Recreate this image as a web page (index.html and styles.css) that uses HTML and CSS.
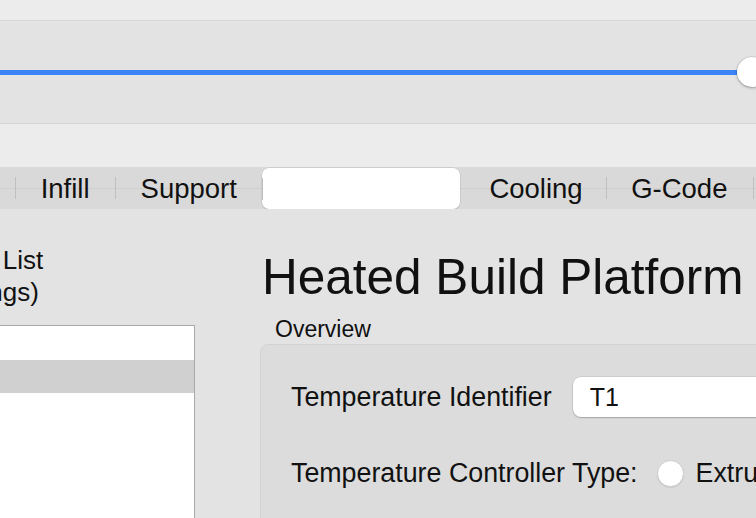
FILE: index.html
```html
<!DOCTYPE html>
<html lang="en">
<head>
<meta charset="utf-8">
<title>FFF Settings</title>
<link rel="stylesheet" href="styles.css">
</head>
<body>
  <div class="window">
    <div class="titlebar"></div>

    <div class="layer-bar">
      <div class="slider">
        <div class="slider-track"></div>
        <div class="slider-knob"></div>
      </div>
    </div>

    <div class="tab-strip">
      <div class="tabs">
        <div class="tab">Additions</div>
        <div class="tab">Infill</div>
        <div class="tab">Support</div>
        <div class="tab tab-active"></div>
        <div class="tab tab-cooling">Cooling</div>
        <div class="tab">G-Code</div>
        <div class="tab">Scripts</div>
      </div>
    </div>

    <div class="content">
      <div class="controller-list">
        <div class="list-title">Temperature Controller List<br>(Click item to edit settings)</div>
        <div class="list-box">
          <div class="list-row">Primary Extruder</div>
          <div class="list-row list-row-selected">Heated Build Platform</div>
        </div>
      </div>

      <div class="controller-detail">
        <h1 class="detail-title">Heated Build Platform</h1>
        <div class="group-label">Overview</div>
        <div class="group-box">
          <div class="form-row">
            <span class="form-label">Temperature Identifier</span>
            <div class="text-field">T1</div>
          </div>
          <div class="form-row">
            <span class="form-label">Temperature Controller Type:</span>
            <span class="radio"></span>
            <span class="radio-label">Extruder</span>
          </div>
        </div>
      </div>
    </div>
  </div>
</body>
</html>
```

FILE: styles.css
```css
html, body {
  margin: 0;
  padding: 0;
}

body {
  width: 756px;
  height: 518px;
  overflow: hidden;
  background: #e3e3e3;
  font-family: "Liberation Sans", Arial, sans-serif;
  color: #111;
}

.window {
  width: 756px;
}

/* window chrome */
.titlebar {
  height: 20px;
  background: #ececec;
  border-bottom: 1px solid #d7d7d7;
}

.layer-bar {
  height: 102px;
  background: #e3e3e3;
  border-bottom: 1px solid #d5d5d5;
  display: flex;
  align-items: center;
}

.slider {
  flex: 1;
  display: flex;
  align-items: center;
  margin-right: -11px;
}

.slider-track {
  flex: 1;
  height: 5px;
  background: #3b83f6;
}

.slider-knob {
  flex: none;
  width: 30px;
  height: 30px;
  border-radius: 50%;
  background: #fff;
  box-shadow: 0 0 0 0.5px rgba(0, 0, 0, 0.12), 0 1px 3px rgba(0, 0, 0, 0.3);
}

/* segmented tab control sitting on the tab view's top edge */
.tab-strip {
  background: #ececec;
  padding-top: 43px;
  overflow: hidden;
}

.tabs {
  position: relative;
  display: flex;
  height: 42px;
  background: #d9d9d9;
  margin-left: -149px;
  width: max-content;
}

.tabs::before {
  content: "";
  position: absolute;
  left: 0;
  right: 0;
  top: 21px;
  height: 1px;
  background: #cfcfcf;
}

.tab {
  position: relative;
  flex: none;
  display: flex;
  align-items: center;
  justify-content: center;
  padding: 1px 25.5px 0;
  font-size: 27.5px;
  color: #111;
}

.tab + .tab::before {
  content: "";
  position: absolute;
  left: 0;
  top: 10px;
  height: 22px;
  width: 1px;
  background: #bfbfbf;
}

.tab-active,
.tab-active + .tab::before,
.tab-active::before {
  background: transparent;
}

.tab-active {
  width: 198px;
  box-sizing: border-box;
  margin-top: 1px;
  background: #fff;
  border-radius: 7px;
  box-shadow: 0 0 0 0.5px rgba(0, 0, 0, 0.1), 0 1px 1px rgba(0, 0, 0, 0.12);
}

.tab-cooling {
  padding-left: 29px;
  padding-right: 23px;
}

/* tab body */
.content {
  display: flex;
  align-items: flex-start;
}

.controller-list {
  flex: none;
  width: 617px;
  margin-left: -422px;
  padding-top: 35px;
}

.list-title {
  font-size: 26px;
  line-height: 32px;
  text-align: center;
}

.list-box {
  margin-top: 17px;
  height: 300px;
  background: #fff;
  border: 1px solid #a9a9a9;
}

.list-row {
  height: 34px;
  line-height: 34px;
  padding-left: 12px;
  font-size: 26px;
  color: transparent;
}

.list-row-selected {
  height: 33px;
  background: #d0d0d0;
}

.controller-detail {
  flex: none;
  width: 700px;
  margin-left: 65px;
  padding-top: 38px;
}

.detail-title {
  margin: 0 0 0 2px;
  font-size: 49.5px;
  font-weight: normal;
  line-height: 60px;
  white-space: nowrap;
}

.group-label {
  margin: 7px 0 0 15px;
  font-size: 23px;
  line-height: 30px;
}

.group-box {
  height: 220px;
  background: #dcdcdc;
  border: 1px solid #d2d2d2;
  border-radius: 8px;
  padding: 32px 0 0 30px;
  display: flex;
  flex-direction: column;
  gap: 36px;
}

.form-row {
  display: flex;
  align-items: center;
  height: 40px;
  white-space: nowrap;
}

.form-label {
  font-size: 26.8px;
}

.text-field {
  margin-left: 21px;
  width: 400px;
  height: 40px;
  box-sizing: border-box;
  padding-left: 17px;
  display: flex;
  align-items: center;
  font-size: 25px;
  background: #fff;
  border-radius: 8px;
  box-shadow: 0 0 0 0.5px rgba(0, 0, 0, 0.12), 0 1px 1.5px rgba(0, 0, 0, 0.22);
}

.radio {
  flex: none;
  margin-left: 19px;
  width: 27px;
  height: 27px;
  box-sizing: border-box;
  border-radius: 50%;
  background: #fff;
  border: 1px solid #cdcdcd;
  box-shadow: 0 1px 1px rgba(0, 0, 0, 0.08);
}

.radio-label {
  margin-left: 12px;
  font-size: 26.8px;
}
```
